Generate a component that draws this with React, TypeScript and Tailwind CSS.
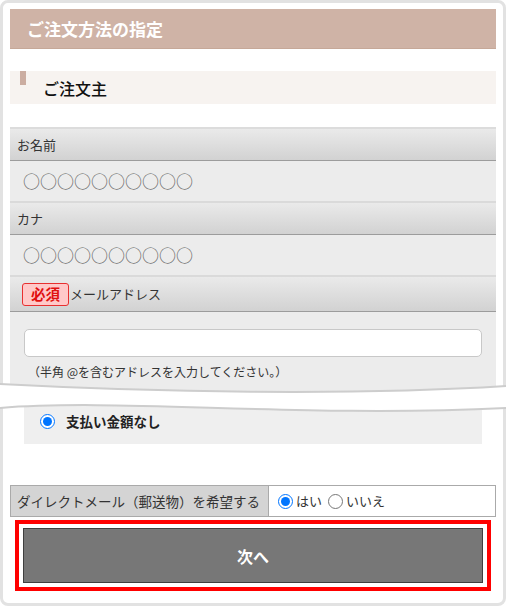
const jp = "font-['Noto_Sans_CJK_JP','Noto_Sans',sans-serif]";

function LabelRow({ children }: { children: React.ReactNode }) {
  return (
    <div className="h-[32px] flex items-center pl-[7px] text-[13px] text-[#333] bg-gradient-to-b from-[#eaeaea] to-[#d2d2d2] border-b border-[#9c9c9c]">
      {children}
    </div>
  );
}

function ValueRow({ children }: { children: React.ReactNode }) {
  return (
    <div className="h-[42px] flex items-center pl-[13px] text-[17px] text-[#666] bg-[#ececec] border-b-2 border-[#dadada]">
      {children}
    </div>
  );
}

export default function App() {
  return (
    <div className={`relative w-[506px] h-[606px] bg-white ${jp}`}>
      <div className="h-full border-[3px] border-[#e2e2e2] rounded-[8px] px-[7px] pt-[6px]">
        <div className="h-[40px] flex items-center pl-[17px] bg-[#cfb3a6] border-b border-[#c6a898] text-white font-bold text-[17px]">
          ご注文方法の指定
        </div>

        <div className="mt-[22px] h-[33px] flex items-start pl-[10px] bg-[#f7f3f0]">
          <span className="w-[6px] h-[14px] bg-[#cbada1]" />
          <span className="self-center ml-[17px] text-[16px] font-medium text-[#111]">ご注文主</span>
        </div>

        <div className="mt-[23px] border-t-2 border-[#dcdcdc]">
          <LabelRow>お名前</LabelRow>
          <ValueRow>○○○○○○○○○○</ValueRow>
          <LabelRow>カナ</LabelRow>
          <ValueRow>○○○○○○○○○○</ValueRow>
          <div className="h-[35px] flex items-center pl-[12px] text-[13px] text-[#333] bg-gradient-to-b from-[#eaeaea] to-[#d2d2d2] border-b border-[#9c9c9c]">
            <span className="h-[23px] px-[8px] flex items-center rounded-[3px] border-[1.5px] border-[#e83030] bg-[#ffc9c9] text-[#e01010] font-bold text-[14.5px]">
              必須
            </span>
            <span className="ml-[1px]">メールアドレス</span>
          </div>
          <div className="bg-[#ececec] pt-[17px] px-[14px] pb-[18px]">
            <div className="h-[28px] rounded-[5px] border border-[#c8c8c8] bg-white" />
            <p className="mt-[6px] pl-[4px] text-[12px] text-[#333]">（半角 @を含むアドレスを入力してください。）</p>
          </div>
        </div>

        <div className="mx-[14px] h-[45px] flex items-center pl-[16px] bg-[#efefef]">
          <input type="radio" defaultChecked className="w-[15px] h-[15px] m-0" />
          <span className="ml-[11px] text-[13.5px] font-bold text-[#222]">支払い金額なし</span>
        </div>

        <div className="mt-[41px] h-[32px] flex border border-[#aaa]">
          <div className="w-[258px] flex items-center pl-[6px] bg-[#d4d4d4] border-r border-[#aaa] text-[13.5px] text-[#333]">
            ダイレクトメール（郵送物）を希望する
          </div>
          <div className="flex-1 flex items-center pl-[9px] bg-white text-[13px] text-[#333]">
            <input type="radio" name="dm" defaultChecked className="w-[15px] h-[15px] m-0" />
            <span className="ml-[3px]">はい</span>
            <input type="radio" name="dm" className="ml-[6px] w-[15px] h-[15px] m-0" />
            <span className="ml-[3px]">いいえ</span>
          </div>
        </div>

        <div className="mt-[3px] mx-[5px] border-4 border-[#ff0000] bg-white p-[4px]">
          <button className="w-full h-[55px] flex items-center justify-center border border-[#3f3f3f] bg-[#777] text-white font-bold text-[16px]">
            次へ
          </button>
        </div>
      </div>

      <svg className="absolute left-0 top-[376px]" width="506" height="44" viewBox="0 0 506 44">
        <path d="M0 8 C150 16 350 20 506 10 L506 32 C300 42 120 22 0 32 Z" fill="#fff" />
        <path d="M0 8 C150 16 350 20 506 10" fill="none" stroke="#cdcdcd" strokeWidth="2" />
        <path d="M0 32 C120 22 300 42 506 32" fill="none" stroke="#cdcdcd" strokeWidth="2" />
      </svg>
    </div>
  );
}
